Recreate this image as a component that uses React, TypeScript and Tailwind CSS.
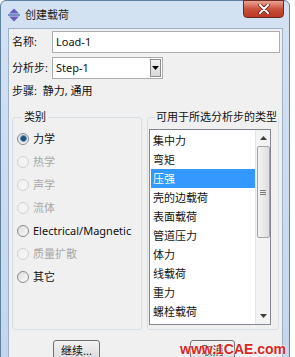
import React from 'react';

const categories = [
  { label: '力学', checked: true, disabled: false },
  { label: '热学', checked: false, disabled: true },
  { label: '声学', checked: false, disabled: true },
  { label: '流体', checked: false, disabled: true },
  { label: 'Electrical/Magnetic', checked: false, disabled: false },
  { label: '质量扩散', checked: false, disabled: true },
  { label: '其它', checked: false, disabled: false },
];

const loadTypes = ['集中力', '弯矩', '压强', '壳的边载荷', '表面载荷', '管道压力', '体力', '线载荷', '重力', '螺栓载荷'];

const Radio = ({ label, checked, disabled }: { label: string; checked: boolean; disabled: boolean }) => (
  <div className="flex items-center h-[23px] gap-[4px]">
    <span
      className={`w-[12px] h-[12px] rounded-full border flex items-center justify-center ${
        disabled
          ? 'border-[#d0d0d0] bg-[#f3f3f3]'
          : 'border-[#8b8b8b] bg-gradient-to-br from-[#dcdcdc] to-[#fbfbfb]'
      }`}
    >
      {checked && (
        <span className="w-[7px] h-[7px] rounded-full bg-[#1d4e7c] border border-[#5d8fbf]" />
      )}
    </span>
    <span className={disabled ? 'text-[#a8a8a8]' : 'text-[#111]'}>{label}</span>
  </div>
);

const TitleIcon = () => (
  <svg width="14" height="14" viewBox="0 0 14 14">
    <path d="M7 0.5 L12 5.5 H2 Z" fill="#6a5fb8" />
    <rect x="1" y="6.3" width="12" height="1.4" fill="#4a6fb0" />
    <path d="M7 13.5 L12 8.5 H2 Z" fill="#6a5fb8" />
  </svg>
);

export default function App() {
  return (
    <div className="w-[295px] h-[357px] bg-white overflow-hidden relative font-['Noto_Sans','Noto_Sans_CJK_SC',sans-serif] text-[11px] leading-[14px]">
      <div className="w-[290px] h-[370px] flex flex-col bg-gradient-to-b from-[#d3e2f3] to-[#c3d6ec] border border-[#60809f] rounded-tr-[6px] rounded-tl-[6px]">
        {/* title bar */}
        <div className="h-[27px] flex justify-between">
          <div className="flex items-center gap-[4px] pl-[6px] pt-[1px]">
            <TitleIcon />
            <span className="text-[#1e1e1e] text-[11px]">创建载荷</span>
          </div>
          <div className="mr-[5px] -mt-[1px] w-[41px] h-[18px] rounded-b-[4px] border border-[#6d2a22] bg-gradient-to-b from-[#e8a493] via-[#c9503d] to-[#b93823] flex items-center justify-center">
            <svg width="12" height="10" viewBox="0 0 12 10">
              <path d="M2 1 L10 9 M10 1 L2 9" stroke="#5a1a12" strokeWidth="3.4" strokeLinecap="round" />
              <path d="M2 1 L10 9 M10 1 L2 9" stroke="#ffffff" strokeWidth="2" strokeLinecap="round" />
            </svg>
          </div>
        </div>

        {/* content */}
        <div className="ml-[7px] w-[275px] flex-1 bg-[#f0f0f0] border border-[#9db1c9] flex flex-col">
          <div className="flex items-center h-[22px] mt-[2px]">
            <span className="w-[43px] pl-[3px] text-[#111]">名称:</span>
            <div className="w-[228px] h-[22px] bg-white border border-[#abadb3] flex items-center pl-[3px] text-[#111]">
              Load-1
            </div>
          </div>
          <div className="flex items-center h-[22px] mt-[4px]">
            <span className="w-[43px] pl-[3px] text-[#111]">分析步:</span>
            <div className="w-[111px] h-[22px] bg-white border border-[#abadb3] flex items-center justify-between pl-[3px] pr-[1px] text-[#111]">
              Step-1
              <div className="w-[11px] h-[18px] border border-[#8e8f8f] bg-gradient-to-b from-[#f2f2f2] to-[#d8d8d8] flex items-center justify-center">
                <svg width="7" height="4" viewBox="0 0 7 4">
                  <path d="M0 0 H7 L3.5 4 Z" fill="#000" />
                </svg>
              </div>
            </div>
          </div>
          <div className="mt-[5px] pl-[3px] h-[14px] text-[#111]">步骤:&nbsp; 静力, 通用</div>

          <div className="flex gap-[5px] px-[3px] mt-[12px]">
            <fieldset className="w-[131px] h-[220px] border border-[#d5dfe5] rounded-[3px] pl-[4px]">
              <legend className="ml-[5px] px-[2px] text-[#111]">类别</legend>
              <div className="pt-[3px]">
                {categories.map((c) => (
                  <Radio key={c.label} {...c} />
                ))}
              </div>
            </fieldset>

            <fieldset className="w-[131px] h-[220px] border border-[#d5dfe5] rounded-[3px] pl-[1px]">
              <legend className="ml-[6px] px-[1px] text-[#111] whitespace-nowrap">可用于所选分析步的类型</legend>
              <div className="mt-[5px] w-[122px] h-[196px] bg-white border border-[#828790] flex">
                <div className="flex-1 pt-[1px] pl-[1px]">
                  {loadTypes.map((t, i) => (
                    <div
                      key={t}
                      className={`h-[19px] flex items-center pl-[2px] ${
                        i === 2 ? 'bg-[#3399ff] text-white' : 'text-[#111]'
                      }`}
                    >
                      {t}
                    </div>
                  ))}
                </div>
                <div className="w-[15px] bg-[#f3f3f3] border-l border-[#e6e6e6] flex flex-col items-center">
                  <div className="h-[16px] flex items-center justify-center">
                    <svg width="7" height="4" viewBox="0 0 7 4">
                      <path d="M0 4 H7 L3.5 0 Z" fill="#3c3c3c" />
                    </svg>
                  </div>
                  <div className="w-[13px] h-[92px] rounded-[2px] border border-[#a3a3a3] bg-gradient-to-r from-[#f4f4f4] to-[#dedede] flex items-center justify-center">
                    <div className="flex flex-col gap-[1px]">
                      <span className="w-[6px] h-[1px] bg-[#7a7a7a]" />
                      <span className="w-[6px] h-[1px] bg-[#7a7a7a]" />
                      <span className="w-[6px] h-[1px] bg-[#7a7a7a]" />
                    </div>
                  </div>
                  <div className="flex-1" />
                  <div className="h-[16px] flex items-center justify-center">
                    <svg width="7" height="4" viewBox="0 0 7 4">
                      <path d="M0 0 H7 L3.5 4 Z" fill="#3c3c3c" />
                    </svg>
                  </div>
                </div>
              </div>
            </fieldset>
          </div>

          <div className="flex mt-[10px] pl-[44px] gap-[90px]">
            <div className="w-[47px] h-[22px] rounded-[3px] border border-[#707070] bg-gradient-to-b from-[#f2f2f2] to-[#dadada] flex items-center justify-center text-[#111]">
              继续...
            </div>
            <div className="w-[45px] h-[22px] rounded-[3px] border border-[#707070] bg-gradient-to-b from-[#f2f2f2] to-[#dadada] flex items-center justify-center text-[#111]">
              取消
            </div>
          </div>
        </div>
      </div>

      {/* watermark */}
      <div className="absolute left-[180px] top-[341px] text-[14px] leading-[16px] font-bold font-['Liberation_Sans',sans-serif] text-[#d9261c] [text-shadow:0_0_2px_#ffffff,0_0_2px_#ffffff]">
        www.1CAE.com
      </div>
    </div>
  );
}
